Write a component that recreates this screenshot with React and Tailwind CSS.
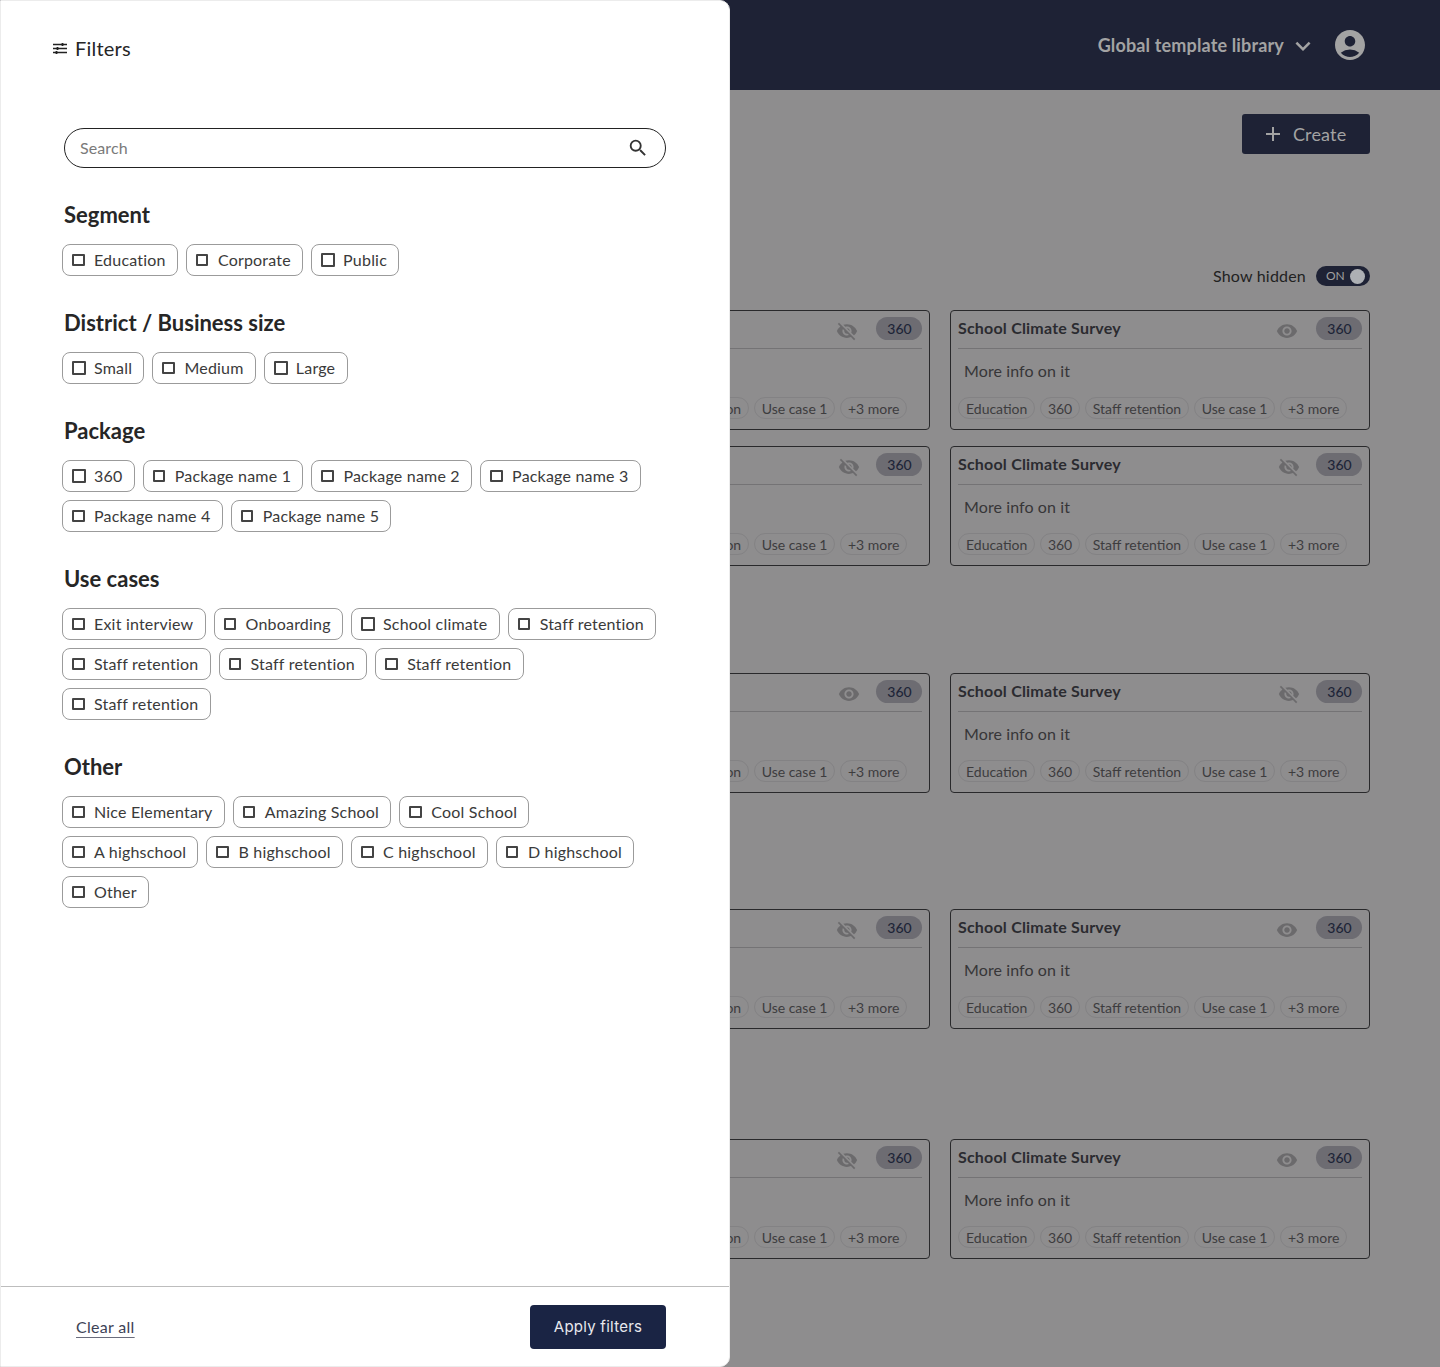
import React from "react";
import { MdAccountCircle, MdAdd, MdExpandMore, MdSearch, MdVisibility, MdVisibilityOff } from "react-icons/md";

const LATO = { fontFamily: '"Lato", "Noto Sans", sans-serif' };
const BIG_BOX = ["Public", "Small", "Large", "360", "School climate"];

function Card({ off, shift }) {
  const Eye = off ? MdVisibilityOff : MdVisibility;
  return (
    <div className="h-[120px] rounded-[4px] border border-[#29292b] px-[7px] flex flex-col">
      <div className="flex items-center h-[38px] border-b border-[#747375]">
        <span className="text-[16px] font-bold leading-5 tracking-[0.2px] text-[#2b2b30] -mt-[3px]">School Climate Survey</span>
        <Eye size={22} className={`ml-auto mt-[3px] text-[#6b6a6c] ${shift ? "mr-[16px]" : "mr-[18px]"}`} />
        <span className="flex items-center justify-center w-[46px] h-[23px] pl-[1px] rounded-full bg-[#6d6c72] text-[14px] font-medium tracking-[0.1px] text-[#1e2538] -mt-[2px]">360</span>
      </div>
      <p className="ml-[6px] mt-[12px] text-[16px] leading-5 tracking-[0.1px] text-[#373638]">More info on it</p>
      <div className="flex gap-[4.5px] mt-[16px]">
        {["Education", "360", "Staff retention", "Use case 1", "+3 more"].map((t) => (
          <span key={t} className="h-[22px] px-[7px] flex items-center rounded-full border border-[#838284] text-[14px] text-[#3d3c3e] whitespace-nowrap">{t}</span>
        ))}
      </div>
    </div>
  );
}

function Chip({ label }) {
  const big = BIG_BOX.includes(label);
  return (
    <label className="h-[32px] pl-[9px] pr-[11.25px] flex items-center gap-[9.5px] rounded-[8px] border border-[#9b9b9b] bg-white text-[16px] tracking-[0.2px] text-[#3a3a3a] whitespace-nowrap">
      <span className={big ? "size-[14px] mr-[-1.5px] border-2 border-[#444] rounded-[1px]" : "size-[12.5px] border-2 border-[#444] rounded-[1px]"} />
      {label}
    </label>
  );
}

function Group({ title, items }) {
  return (
    <section className="mt-[33px] first:mt-[34px]">
      <h2 className="ml-[2px] text-[22px] leading-[28px] font-bold text-[#262626]">{title}</h2>
      <div className="mt-[15px] flex flex-wrap gap-x-[8px] gap-y-[8px]">
        {items.map((t, i) => <Chip key={i} label={t} />)}
      </div>
    </section>
  );
}

const groups = [
  ["Segment", ["Education", "Corporate", "Public"]],
  ["District / Business size", ["Small", "Medium", "Large"]],
  ["Package", ["360", "Package name 1", "Package name 2", "Package name 3", "Package name 4", "Package name 5"]],
  ["Use cases", ["Exit interview", "Onboarding", "School climate", "Staff retention", "Staff retention", "Staff retention", "Staff retention", "Staff retention"]],
  ["Other", ["Nice Elementary", "Amazing School", "Cool School", "A highschool", "B highschool", "C highschool", "D highschool", "Other"]],
];

export default function App() {
  return (
    <div style={LATO} className="relative h-[1367px] w-[1440px] overflow-hidden bg-[#8e8d8e]">
      <header className="h-[90px] bg-[#1e2235] flex items-center justify-end pr-[72px]">
        <span className="text-[18px] font-bold tracking-[0.15px] text-[#a3a3a3]">Global template library</span>
        <MdExpandMore size={30} className="ml-[3.5px] mt-[2px] text-[#a3a3a3]" />
        <MdAccountCircle size={36} className="ml-[14.5px] text-[#a3a3a3]" />
      </header>

      <div className="flex justify-end pr-[70px] pt-[24px]">
        <button className="w-[128px] h-[40px] pl-[19px] rounded-[3px] bg-[#1e2235] flex items-center gap-[8px] text-[18px] tracking-[0.15px] text-[#a3a3a3]">
          <MdAdd size={24} />
          Create
        </button>
      </div>

      <div className="flex items-center justify-end gap-[10px] pr-[70px] mt-[110px]">
        <span className="text-[16px] tracking-[0.2px] text-[#222]">Show hidden</span>
        <div className="relative w-[54px] h-[20px] rounded-full bg-[#1e2235] flex items-center pl-[10px] text-[12px] text-[#a0a0a0]">
          ON
          <span className="absolute right-[5.5px] top-[2.5px] size-[15px] rounded-full bg-[#adb0b4]" />
        </div>
      </div>

      <main className="ml-[510px] w-[860px] mt-[22px]">
        <div className="grid grid-cols-2 gap-x-[20px] gap-y-[16px]">
          <Card off={true} /><Card off={false} />
          <Card off={true} shift /><Card off={true} shift />
        </div>
        <div className="grid grid-cols-2 gap-x-[20px] mt-[107px]">
          <Card off={false} shift /><Card off={true} shift />
        </div>
        <div className="grid grid-cols-2 gap-x-[20px] mt-[116px]">
          <Card off={true} /><Card off={false} />
        </div>
        <div className="grid grid-cols-2 gap-x-[20px] mt-[110px]">
          <Card off={true} /><Card off={false} />
        </div>
      </main>

      <aside className="absolute inset-y-0 left-0 w-[730px] bg-white border border-[#ececec] rounded-r-[10px] flex flex-col">
        <div className="flex-1 pl-[61px] pr-[63px]">
          <div className="flex items-center h-[98px] -ml-[9px] pb-[5px] gap-[8px]">
            <svg width="14" height="11" viewBox="0 0 14 11" fill="none" stroke="#222" strokeWidth="1.5" className="mt-[1px]">
              <path d="M0 1.5H14M0 5.5H14M0 9.5H14" />
              <path d="M9.5 0V3M4.5 4V7M3.5 8V11" strokeWidth="1.8" />
            </svg>
            <span className="text-[20px] text-[#262626] tracking-[0.2px]">Filters</span>
          </div>
          <div className="ml-[2px] mt-[29px] h-[40px] rounded-full border border-[#222] flex items-center pl-[15px] pr-[16px] text-[16px] tracking-[0.1px] text-[#7a7a7a]">
            Search
            <MdSearch size={22} className="ml-auto text-[#333]" />
          </div>
          {groups.map(([title, items]) => <Group key={title} title={title} items={items} />)}
        </div>
        <footer className="h-[80px] border-t border-[#bdbdbd] flex items-center justify-between pl-[75px] pr-[63px]">
          <a className="text-[16px] tracking-[0.3px] text-[#3d4256] underline underline-offset-[4px] decoration-[#6a6c7c]">Clear all</a>
          <button style={{ fontFamily: '"Inter", sans-serif' }} className="w-[136px] h-[44px] pt-[1px] rounded-[4px] bg-[#1a2444] text-[15px] tracking-[0.25px] text-[#e8e9ee]">Apply filters</button>
        </footer>
      </aside>
    </div>
  );
}
